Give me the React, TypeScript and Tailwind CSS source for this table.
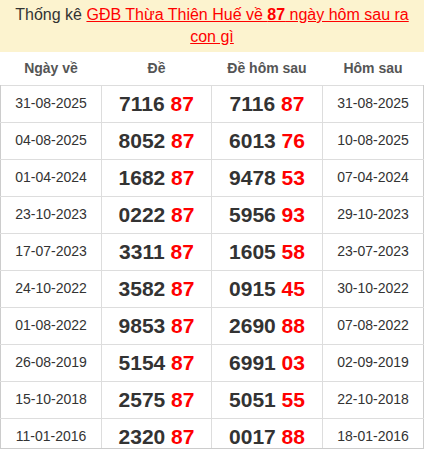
const rows: [string, string, string, string, string, string][] = [
  ["31-08-2025", "7116", "87", "7116", "87", "31-08-2025"],
  ["04-08-2025", "8052", "87", "6013", "76", "10-08-2025"],
  ["01-04-2024", "1682", "87", "9478", "53", "07-04-2024"],
  ["23-10-2023", "0222", "87", "5956", "93", "29-10-2023"],
  ["17-07-2023", "3311", "87", "1605", "58", "23-07-2023"],
  ["24-10-2022", "3582", "87", "0915", "45", "30-10-2022"],
  ["01-08-2022", "9853", "87", "2690", "88", "07-08-2022"],
  ["26-08-2019", "5154", "87", "6991", "03", "02-09-2019"],
  ["15-10-2018", "2575", "87", "5051", "55", "22-10-2018"],
  ["11-01-2016", "2320", "87", "0017", "88", "18-01-2016"],
];

function Num({ head, tail }: { head: string; tail: string }) {
  return (
    <span className="text-[21px] font-bold">
      <span className="text-[#333]">{head}</span>{" "}
      <span className="text-[#ff0000]">{tail}</span>
    </span>
  );
}

export default function App() {
  return (
    <div className="w-[424px] h-[449px] overflow-hidden bg-white border-b border-[#ccc] font-['Liberation_Sans',Arial,sans-serif]">
      <div className="bg-[#fcf3cf] px-2 pt-[4px] pb-[4px] text-center text-[16px] leading-[22px] text-[#333]">
        Thống kê{" "}
        <a href="#" className="text-[#ff0000] underline">
          GĐB Thừa Thiên Huế về <b>87</b> ngày hôm sau ra con gì
        </a>
      </div>
      <table className="w-[423px] border-collapse table-fixed">
        <colgroup>
          <col className="w-[101px]" />
          <col className="w-[110px]" />
          <col className="w-[111px]" />
          <col className="w-[101px]" />
        </colgroup>
        <thead>
          <tr className="h-[33px] border-b border-[#ddd]">
            <th className="text-[14px] font-bold text-[#555]">Ngày về</th>
            <th className="text-[14px] font-bold text-[#555]">Đề</th>
            <th className="text-[14px] font-bold text-[#555]">Đề hôm sau</th>
            <th className="text-[14px] font-bold text-[#555]">Hôm sau</th>
          </tr>
        </thead>
        <tbody>
          {rows.map((r) => (
            <tr key={r[0]} className="h-[37px]">
              <td className="border border-[#ddd] border-l-[#ccc] text-center text-[14px] text-[#333]">{r[0]}</td>
              <td className="border border-[#ddd] text-center">
                <Num head={r[1]} tail={r[2]} />
              </td>
              <td className="border border-[#ddd] text-center">
                <Num head={r[3]} tail={r[4]} />
              </td>
              <td className="border border-[#ddd] border-r-[#ccc] text-center text-[14px] text-[#333]">{r[5]}</td>
            </tr>
          ))}
        </tbody>
      </table>
    </div>
  );
}
